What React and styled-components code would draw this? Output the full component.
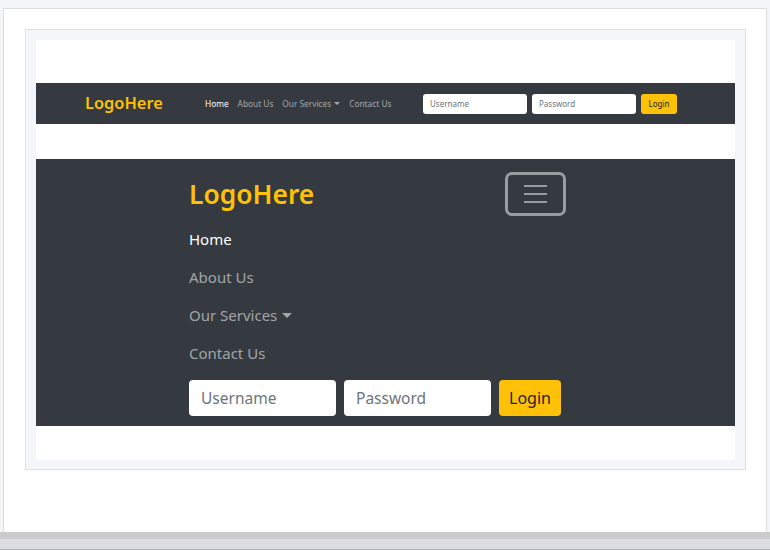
import React from "react";
import styled, { createGlobalStyle } from "styled-components";

const GlobalStyle = createGlobalStyle`
  body {
    margin: 0;
    background: #f4f5f7;
    font-family: "Noto Sans", "Open Sans", sans-serif;
  }
`;

const Page = styled.div`
  height: 550px;
  display: flex;
  flex-direction: column;
  overflow: hidden;
`;

const Card = styled.div`
  flex: 1;
  margin: 8px 3px 0;
  background: #fff;
  border: 1px solid #dcdcdc;
  border-bottom: none;
  padding: 20px 0 0 21px;
`;

const Frame = styled.div`
  width: 699px;
  height: 419px;
  padding: 10px;
  background: #f5f6fa;
  border: 1px solid #d6e1f3;
`;

const Canvas = styled.div`
  height: 420px;
  background: #fff;
  padding-top: 43px;
  box-sizing: border-box;
`;

const DarkBar = styled.nav`
  background: #343a40;
`;

const WideBar = styled(DarkBar)`
  height: 41px;
  display: flex;
  align-items: center;
  padding-left: 49px;
`;

const Brand = styled.span`
  color: #ffc107;
  font-weight: 600;
  font-size: ${(p) => (p.$big ? "26.4px" : "16.4px")};
  line-height: 1;
  white-space: nowrap;
  width: ${(p) => (p.$big ? "auto" : "78px")};
`;

const LinkRow = styled.div`
  display: flex;
  gap: 9px;
  margin-left: 42px;
  width: 185px;
`;

const NavLink = styled.span`
  color: ${(p) => (p.$active ? "#fff" : "rgba(255,255,255,0.55)")};
  font-size: ${(p) => (p.$big ? "15px" : "8.3px")};
  white-space: nowrap;
  display: inline-flex;
  align-items: center;
  ${(p) => (p.$big ? "height: 38px;" : "")}
`;

const Caret = styled.span`
  display: inline-block;
  margin-left: ${(p) => (p.$big ? "5px" : "3px")};
  border-top: ${(p) => (p.$big ? "5px" : "3px")} solid currentColor;
  border-left: ${(p) => (p.$big ? "5px" : "3px")} solid transparent;
  border-right: ${(p) => (p.$big ? "5px" : "3px")} solid transparent;
`;

const LoginForm = styled.div`
  display: flex;
  gap: ${(p) => (p.$big ? "8px" : "5px")};
  margin-left: ${(p) => (p.$big ? "0" : "33px")};
  ${(p) => (p.$big ? "margin-top: 8px;" : "")}
`;

const Field = styled.input`
  box-sizing: border-box;
  border: none;
  background: #fff;
  font-family: inherit;
  color: #495057;
  outline: none;
  width: ${(p) => (p.$big ? "147px" : "104px")};
  height: ${(p) => (p.$big ? "36px" : "20px")};
  border-radius: ${(p) => (p.$big ? "4px" : "3px")};
  font-size: ${(p) => (p.$big ? "15.5px" : "8px")};
  padding: 0 ${(p) => (p.$big ? "12px" : "7px")};

  &::placeholder {
    color: #6c757d;
  }
`;

const LoginButton = styled.button`
  border: none;
  background: #ffc107;
  color: #212529;
  font-family: inherit;
  cursor: pointer;
  padding: 0;
  width: ${(p) => (p.$big ? "62px" : "36px")};
  height: ${(p) => (p.$big ? "36px" : "20px")};
  border-radius: ${(p) => (p.$big ? "4px" : "3px")};
  font-size: ${(p) => (p.$big ? "16px" : "8px")};
`;

const Gap = styled.div`
  height: 35px;
`;

const TallBar = styled(DarkBar)`
  height: 267px;
  box-sizing: border-box;
  padding: 13px 0 10px 153px;
`;

const Column = styled.div`
  width: 377px;
  display: flex;
  flex-direction: column;
`;

const BrandRow = styled.div`
  display: flex;
  align-items: center;
  justify-content: space-between;
  height: 44px;
`;

const Toggler = styled.button`
  box-sizing: border-box;
  width: 61px;
  height: 44px;
  border: 3px solid #9a9da0;
  border-radius: 7px;
  background: transparent;
  display: flex;
  flex-direction: column;
  align-items: center;
  justify-content: center;
  gap: 6px;
  padding: 0;
`;

const TogglerLine = styled.span`
  width: 23px;
  height: 2px;
  background: #9a9da0;
`;

const LinkStack = styled.div`
  display: flex;
  flex-direction: column;
  align-items: flex-start;
  padding-top: 4px;
`;

const BottomBar = styled.div`
  height: 17px;
  background: #cbcbcb;
  border-bottom: 1px solid #b0b0b0;
  flex-shrink: 0;
  box-shadow: inset 0 -10px 0 #dcdde3;
`;

const links = ["Home", "About Us", "Our Services", "Contact Us"];

const Links = ({ big }) =>
  links.map((label, i) => (
    <NavLink key={label} $active={i === 0} $big={big}>
      {label}
      {label === "Our Services" && <Caret $big={big} />}
    </NavLink>
  ));

const Login = ({ big }) => (
  <LoginForm $big={big}>
    <Field $big={big} placeholder="Username" />
    <Field $big={big} type="password" placeholder="Password" />
    <LoginButton $big={big}>Login</LoginButton>
  </LoginForm>
);

const App = () => {
  return (
    <Page>
      <GlobalStyle />
      <Card>
        <Frame>
          <Canvas>
            <WideBar>
              <Brand>LogoHere</Brand>
              <LinkRow>
                <Links />
              </LinkRow>
              <Login />
            </WideBar>
            <Gap />
            <TallBar>
              <Column>
                <BrandRow>
                  <Brand $big>LogoHere</Brand>
                  <Toggler>
                    <TogglerLine />
                    <TogglerLine />
                    <TogglerLine />
                  </Toggler>
                </BrandRow>
                <LinkStack>
                  <Links big />
                </LinkStack>
                <Login big />
              </Column>
            </TallBar>
          </Canvas>
        </Frame>
      </Card>
      <BottomBar />
    </Page>
  );
};

export default App;
